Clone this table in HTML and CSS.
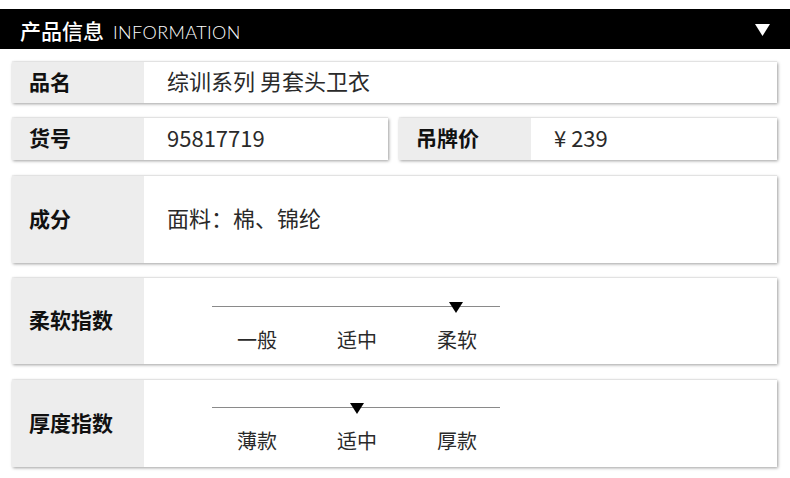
FILE: index.html
```html
<!DOCTYPE html>
<html lang="zh-CN">
<head>
<meta charset="utf-8">
<title>产品信息</title>
<link rel="stylesheet" href="styles.css">
</head>
<body>
<div class="page">
  <header class="bar">
    <h1 class="bar-title">产品信息 <span class="bar-en">INFORMATION</span></h1>
    <svg class="bar-arrow" width="15" height="12" viewBox="0 0 15 12"><polygon points="0,0 15,0 7.5,12" fill="#fff"/></svg>
  </header>

  <div class="rows">
    <div class="card row-a">
      <div class="label">品名</div>
      <div class="value">综训系列 男套头卫衣</div>
    </div>

    <div class="pair">
      <div class="card">
        <div class="label">货号</div>
        <div class="value">95817719</div>
      </div>
      <div class="card">
        <div class="label">吊牌价</div>
        <div class="value">¥ 239</div>
      </div>
    </div>

    <div class="card tall">
      <div class="label">成分</div>
      <div class="value">面料：棉、锦纶</div>
    </div>

    <div class="card mid">
      <div class="label">柔软指数</div>
      <div class="scale">
        <div class="track"><span class="marker" style="left: 244px"></span></div>
        <div class="ticks"><span>一般</span><span>适中</span><span>柔软</span></div>
      </div>
    </div>

    <div class="card tall">
      <div class="label">厚度指数</div>
      <div class="scale">
        <div class="track"><span class="marker" style="left: 145px"></span></div>
        <div class="ticks"><span>薄款</span><span>适中</span><span>厚款</span></div>
      </div>
    </div>
  </div>
</div>
</body>
</html>
```

FILE: styles.css
```css
* { box-sizing: border-box; }
html, body { margin: 0; padding: 0; background: #fff; }
body {
  font-family: "Noto Sans CJK SC", "Noto Sans", sans-serif;
  color: #111;
}
.page { width: 790px; padding-top: 9px; padding-bottom: 11px; }

.bar {
  height: 40px;
  background: #000;
  display: flex;
  align-items: center;
  justify-content: space-between;
  padding: 0 20px 0 20px;
}
.bar-title {
  margin: 0;
  font-size: 21px;
  font-weight: 500;
  color: #fff;
  line-height: 1;
  display: flex;
  align-items: baseline;
  gap: 9px;
  padding-top: 2px;
}
.bar-en {
  font-family: "Lato", "Open Sans", sans-serif;
  font-weight: 300;
  font-size: 18px;
  letter-spacing: 0.4px;
}
.bar-arrow { display: block; margin-top: 1px; }

.rows {
  display: flex;
  flex-direction: column;
  padding: 13px 13px 0 12px;
}
.pair {
  display: grid;
  grid-template-columns: 376px 1fr;
  gap: 11px;
  margin-top: 15px;
}
.card {
  display: flex;
  height: 42px;
  background: #fff;
  box-shadow: 1px 1px 3px rgba(0,0,0,0.38), 0 -1px 1px rgba(0,0,0,0.05);
}
.card.row-a { height: 41px; }
.card.tall { height: 87px; margin-top: 16px; }
.card.mid { height: 86px; margin-top: 15px; }
.label {
  width: 132px;
  flex: none;
  background: #ededed;
  display: flex;
  align-items: center;
  padding-left: 17px;
  padding-bottom: 4px;
  font-size: 21px;
  font-weight: 700;
  color: #111;
}
.value {
  display: flex;
  align-items: center;
  padding-left: 23px;
  padding-bottom: 5px;
  font-size: 22px;
  font-weight: 400;
  color: #2a2a2a;
}

.scale {
  margin-left: 68px;
  width: 288px;
  padding-top: 28px;
}
.tall .scale { padding-top: 27px; }
.track {
  position: relative;
  height: 1px;
  background: #8a8a8a;
}
.marker {
  position: absolute;
  top: -4px;
  width: 0;
  height: 0;
  margin-left: -7px;
  border-left: 7px solid transparent;
  border-right: 7px solid transparent;
  border-top: 11px solid #000;
}
.ticks {
  display: grid;
  grid-template-columns: repeat(3, 100px);
  margin-left: -5px;
  margin-top: 21px;
}
.ticks span {
  text-align: center;
  font-size: 20px;
  font-weight: 400;
  color: #2a2a2a;
  line-height: 1.2;
}
```
